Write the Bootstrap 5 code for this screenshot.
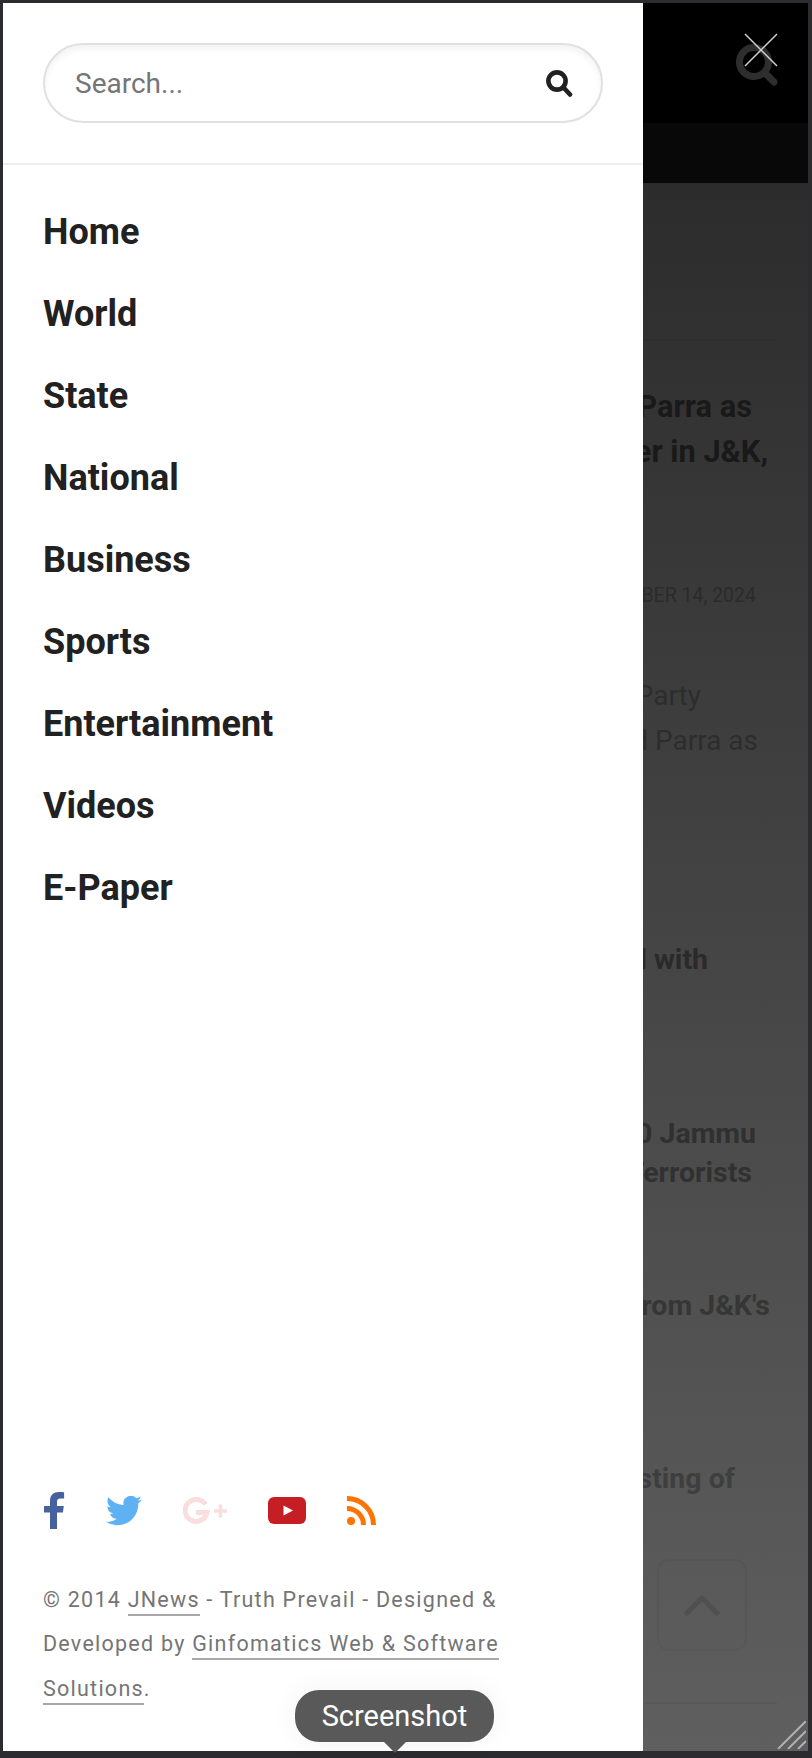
<!DOCTYPE html>
<html lang="en">
<head>
    <meta charset="UTF-8">
    <meta name="viewport" content="width=device-width, initial-scale=1.0">
    <title>JNews</title>
    <link href="https://cdn.jsdelivr.net/npm/bootstrap@5.3.3/dist/css/bootstrap.min.css" rel="stylesheet">
    <style>
        html, body { height: 100%; }
        body {
            font-family: Roboto, "Liberation Sans", sans-serif;
            background: #2b2b30;
            overflow: hidden;
        }
        .shell {
            height: 1758px;
            padding: 3px 4px 7px 3px;
            position: relative;
        }
        .drawer {
            width: 640px;
            flex: none;
            background: #fff;
            color: #212121;
        }
        .search-wrap {
            height: 162px;
            padding: 40px 40px 0;
            border-bottom: 2px solid #eee;
            flex: none;
        }
        .search-box {
            height: 80px;
            border: 2px solid #e0e0e0;
            border-radius: 40px;
            padding: 0 28px 0 30px;
            box-shadow: inset 0 4px 6px rgba(0, 0, 0, .05);
        }
        .search-box span { font-size: 28px; color: #757575; margin-top: 2px; }
        .menu-list { padding: 26px 0 0 40px; }
        .menu-list a {
            display: block;
            height: 82px;
            line-height: 82px;
            font-size: 36px;
            font-weight: 700;
            color: #212121;
            text-decoration: none;
        }
        .drawer-foot { padding: 0 40px 40px; }
        .social-row { height: 40px; margin-bottom: 47px; }
        .social-row svg { display: block; flex: none; }
        .copy-text {
            width: 510px;
            font-size: 21.5px;
            line-height: 44.5px;
            letter-spacing: 1.25px;
            color: #757575;
            margin: 0;
        }
        .copy-text a {
            color: #757575;
            text-decoration: none;
            border-bottom: 2px solid #a8a8a8;
            padding-bottom: 2px;
        }
        .behind {
            min-width: 0;
            overflow: hidden;
            position: relative;
            background: linear-gradient(#2c2c2c 0, #2c2c2c 183px, #5f5f5f 100%);
        }
        .top-black { height: 120px; background: #000; padding: 40px 29px 0 0; }
        .top-sub { height: 60px; background: #080808; }
        .tline {
            white-space: nowrap;
            line-height: 1;
        }
        .sep { height: 2px; background: rgba(0, 0, 0, .05); margin-right: 31px; }
        .head-big { font-size: 30.8px; font-weight: 700; color: #191919; height: 45px; line-height: 45px; }
        .head-sm { font-size: 28.5px; font-weight: 700; height: 39px; line-height: 39px; }
        .meta-date { font-size: 19.5px; color: #2b2b2b; height: 30px; line-height: 30px; }
        .body-line { font-size: 28px; color: #2d2d2d; height: 45px; line-height: 45px; }
        .totop {
            width: 90px;
            height: 92px;
            border: 2px solid rgba(0, 0, 0, .035);
            border-radius: 12px;
            margin: 0 61px 0 13px;
        }
        .grip { position: absolute; right: 2px; bottom: 2px; }
        .shot-tip {
            position: absolute;
            left: 295px;
            top: 1690px;
            width: 199px;
            height: 52px;
            padding-top: 2px;
            background: #595959;
            border-radius: 24px;
            color: #fff;
            font-size: 29px;
            box-shadow: 0 0 0 1px rgba(255, 255, 255, .25), 0 0 30px rgba(0, 0, 0, .05);
        }
        .shot-tip::after {
            content: "";
            position: absolute;
            left: 88px;
            bottom: -11px;
            width: 0;
            height: 0;
            border-left: 12px solid transparent;
            border-right: 12px solid transparent;
            border-top: 12px solid #595959;
        }
    </style>
</head>
<body>
    <div class="shell d-flex">
        <!-- Slide-out menu -->
        <div class="drawer d-flex flex-column">
            <div class="search-wrap">
                <div class="search-box d-flex align-items-center justify-content-between">
                    <span>Search...</span>
                    <svg width="28" height="28" viewBox="0 0 28 28" fill="none" stroke="#212121">
                        <circle cx="12" cy="12" r="8.6" stroke-width="4.6"/>
                        <path d="M18.5 18.5 25 25.5" stroke-width="4.6" stroke-linecap="round"/>
                    </svg>
                </div>
            </div>

            <nav class="menu-list flex-grow-1">
                <a href="#">Home</a>
                <a href="#">World</a>
                <a href="#">State</a>
                <a href="#">National</a>
                <a href="#">Business</a>
                <a href="#">Sports</a>
                <a href="#">Entertainment</a>
                <a href="#">Videos</a>
                <a href="#">E-Paper</a>
            </nav>

            <div class="drawer-foot">
                <div class="social-row d-flex align-items-center">
                    <svg width="21" height="37" viewBox="0 0 21 37" style="margin-left:1px"><path fill="#45629f" d="M6 37V20.5H0v-6.6h6V9c0-6 3.600-9 8.800-9 2.500 0 4.700.2 5.300.3v6.200h-3.600c-2.900 0-3.500 1.400-3.500 3.400v4.100h6.800l-.9 6.600h-5.900V37z"/></svg>
                    <svg width="36" height="30" viewBox="0 0 24 20" style="margin-left:41px"><path fill="#5eb2f1" transform="translate(0 -2.300)" d="M23.953 4.57a10 10 0 01-2.825.775 4.958 4.958 0 002.163-2.723c-.951.555-2.005.959-3.127 1.184a4.92 4.92 0 00-8.384 4.482C7.69 8.095 4.067 6.13 1.64 3.162a4.822 4.822 0 00-.666 2.475c0 1.71.87 3.213 2.188 4.096a4.904 4.904 0 01-2.228-.616v.06a4.923 4.923 0 003.946 4.827 4.996 4.996 0 01-2.212.085 4.936 4.936 0 004.604 3.417 9.867 9.867 0 01-6.102 2.105c-.39 0-.779-.023-1.17-.067a13.995 13.995 0 007.557 2.209c9.053 0 13.998-7.496 13.998-13.985 0-.21 0-.42-.015-.63A9.935 9.935 0 0024 4.59z"/></svg>
                    <svg width="46" height="28" viewBox="0 0 46 28" style="margin-left:41px" fill="none" stroke="#f8dfdd" stroke-width="5"><path d="M22.500 7.500A11 11 0 1 0 24 15.500H13"/><path stroke-width="3.500" d="M31 14h13M37.500 7.500v13"/></svg>
                    <svg width="38" height="27" viewBox="0 0 38 27" style="margin-left:39px"><rect width="38" height="27" rx="6" fill="#c61e25"/><path fill="#fff" d="M15.500 8.500v10l9.500-5z"/></svg>
                    <svg width="30" height="29" viewBox="0 0 30 29" style="margin-left:41px" fill="none" stroke="#ff7300" stroke-width="5"><circle cx="4" cy="25" r="4" fill="#ff7300" stroke="none"/><path d="M0 12.500A16.500 16.500 0 0 1 16.500 29M0 2.500A26.500 26.500 0 0 1 26.500 29"/></svg>
                </div>
                <p class="copy-text">© 2014 <a href="#">JNews</a> - Truth Prevail - Designed &amp; Developed by <a href="#">Ginfomatics Web &amp; Software Solutions</a>.</p>
            </div>
        </div>

        <!-- Page behind the open menu -->
        <div class="behind flex-grow-1 d-flex flex-column">
            <div class="top-black d-flex justify-content-end position-relative">
                <svg width="44" height="44" viewBox="0 0 44 44" fill="none" stroke="#2e2e2e">
                    <circle cx="19" cy="19" r="14.500" stroke-width="7"/>
                    <path d="M30 30 39 39" stroke-width="7" stroke-linecap="round"/>
                </svg>
            </div>
            <div class="top-sub"></div>
            <div class="sep" style="margin-top:156px"></div>
            <div class="tline head-big d-flex justify-content-end" style="margin-top:43px;padding-right:56px">Parra as</div>
            <div class="tline head-big d-flex justify-content-end" style="padding-right:40px">Tower in J&amp;K,</div>
            <div class="tline meta-date d-flex justify-content-end" style="margin-top:107px;padding-right:52px">SEPTEMBER 14, 2024</div>
            <div class="tline body-line d-flex justify-content-end" style="margin-top:62px;padding-right:107px">Party</div>
            <div class="tline body-line d-flex justify-content-end" style="padding-right:50px">Hamid Parra as</div>
            <div class="tline head-sm d-flex justify-content-end" style="margin-top:177px;padding-right:100px;color:#2a2a2a">Filled with</div>
            <div class="tline head-sm d-flex justify-content-end" style="margin-top:135px;padding-right:52px;color:#303030">100 Jammu</div>
            <div class="tline head-sm d-flex justify-content-end" style="padding-right:56px;color:#313131">Terrorists</div>
            <div class="tline head-sm d-flex justify-content-end" style="margin-top:94px;padding-right:38px;color:#363636">from J&amp;K's</div>
            <div class="tline head-sm d-flex justify-content-end" style="margin-top:134px;padding-right:73px;color:#3e3e3e">Listing of</div>
            <div class="d-flex justify-content-end" style="margin-top:61px">
                <div class="totop d-flex align-items-center justify-content-center">
                    <svg width="36" height="22" viewBox="0 0 36 22" fill="none" stroke="#505050" stroke-width="5" stroke-linecap="round" stroke-linejoin="round"><path d="M3 19 18 4 33 19"/></svg>
                </div>
            </div>
            <div class="sep" style="margin-top:51px"></div>
            <svg class="grip" width="30" height="28" viewBox="0 0 30 28" fill="none" stroke="#b0b0b0" stroke-width="2"><path d="M2 28 30 0M12 28 30 10M22 28 30 20"/></svg>
        </div>

        <!-- Close button over the page header -->
        <svg class="position-absolute" style="left:744px;top:33px" width="34" height="34" viewBox="0 0 34 34" fill="none" stroke="#d0d0d0" stroke-width="1.500"><path d="M1 1 33 33M33 1 1 33"/></svg>

        <!-- Screenshot tooltip -->
        <div class="shot-tip d-flex align-items-center justify-content-center">Screenshot</div>
    </div>
    <script src="https://cdn.jsdelivr.net/npm/bootstrap@5.3.3/dist/js/bootstrap.bundle.min.js"></script>
</body>
</html>
